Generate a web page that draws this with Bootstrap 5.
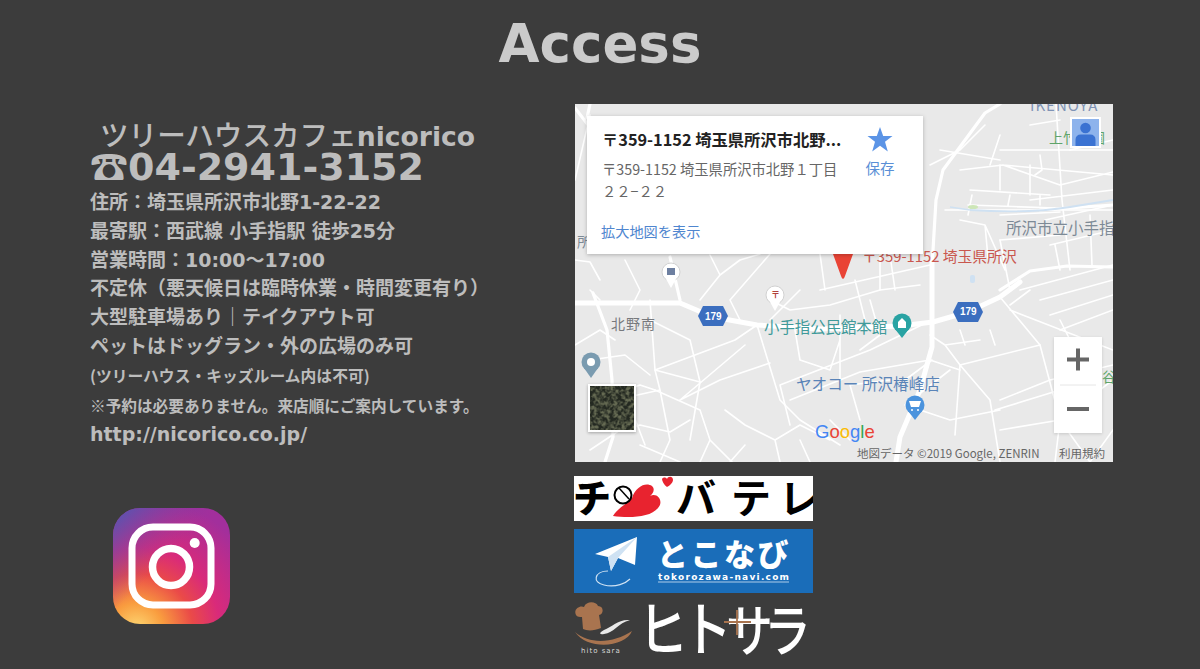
<!DOCTYPE html>
<html lang="ja">
<head>
<meta charset="utf-8">
<title>Access</title>
<link rel="stylesheet" href="https://cdn.jsdelivr.net/npm/bootstrap@5.3.0/dist/css/bootstrap.min.css">
<style>
html,body{height:100%}
body{background:#3c3c3c;color:#bdbdbd;font-family:"DejaVu Sans","Noto Sans CJK JP",sans-serif;overflow:hidden}
.page-title{font-family:"DejaVu Sans",sans-serif;font-weight:700;font-size:53px;line-height:66px;color:#cbcbcb;margin:11px 0 27px}
.left-col{width:575px;padding-left:90px}
.info{font-weight:700;font-size:19px;line-height:28.800px;white-space:nowrap;font-family:"Noto Sans CJK JP","DejaVu Sans",sans-serif;word-spacing:2px}
.info>div{height:28.800px}
.info .lat{font-family:"DejaVu Sans","Noto Sans CJK JP",sans-serif}
.info>.shop{font-size:28.600px;height:30px;line-height:30px;padding-left:10px;margin-top:15px;font-weight:500}
.shop .lat{font-size:26.600px;font-weight:700}
.info>.tel{font-size:38px;height:38px;line-height:30px;font-family:"DejaVu Sans",sans-serif;margin-bottom:0}
.tel .ph{font-family:"Noto Sans CJK JP","DejaVu Sans",sans-serif}
.info>.small1{font-size:15.800px;height:31px;line-height:31px}
.info>.small2{font-size:15.670px;height:29px;line-height:29px}
.info>.url{font-size:19px;line-height:28px;word-spacing:0}
.insta{margin:59px 0 0 23px;display:block}
.map{position:relative;width:538px;height:358px;background:#e9e9e9;overflow:hidden;font-family:"Noto Sans CJK JP","Liberation Sans",sans-serif}
.map>svg.base{position:absolute;inset:0;filter:blur(.35px)}
.lbl{position:absolute;white-space:nowrap;line-height:1}
.info-card{position:absolute;left:12px;top:12px;width:336px;height:138px;background:#fff;box-shadow:0 1px 4px rgba(0,0,0,.25);padding:13px 15px}
.info-title{font-weight:700;font-size:16.300px;line-height:20px;color:#222;white-space:nowrap}
.info-addr{font-size:14.300px;line-height:22px;color:#666;margin-top:9px;white-space:nowrap}
.info-link{position:absolute;left:14px;bottom:13px;font-size:14.200px;line-height:20px;color:#4f86cf}
.info-save{position:absolute;left:268px;top:11px;width:50px;text-align:center;color:#5a8fd6;font-size:14.500px;line-height:20px}
.info-save svg{margin-bottom:6px}
.zoomctl{position:absolute;left:479px;top:233px;width:48px;height:96px;background:#fff;box-shadow:0 1px 3px rgba(0,0,0,.15)}
.person{position:absolute;left:495px;top:13px;width:31px;height:31px;border:2px solid #fff;background:#8db3ec}
.sat{position:absolute;left:13px;top:280px;width:48px;height:48px;border:2px solid #fff;box-shadow:0 1px 3px rgba(0,0,0,.3);overflow:hidden}
.logos{margin-top:14px;margin-left:-1px;gap:8px;width:239px}
.logos svg{display:block}
</style>
</head>
<body>
<h1 class="page-title text-center">Access</h1>
<main class="d-flex align-items-start">
<section class="left-col">
<div class="info">
<div class="shop">ツリーハウスカフェ<span class="lat">nicorico</span></div>
<div class="tel"><span class="ph">☎</span>04-2941-3152</div>
<div>住所：埼玉県所沢市北野<span class="lat">1-22-22</span></div>
<div>最寄駅：西武線 小手指駅 徒歩<span class="lat">25</span>分</div>
<div>営業時間：<span class="lat">10:00</span>～<span class="lat">17:00</span></div>
<div>不定休（悪天候日は臨時休業・時間変更有り）</div>
<div>大型駐車場あり｜テイクアウト可</div>
<div>ペットはドッグラン・外の広場のみ可</div>
<div class="small1">(ツリーハウス・キッズルーム内は不可)</div>
<div class="small2">※予約は必要ありません。来店順にご案内しています。</div>
<div class="url lat">http://nicorico.co.jp/</div>
</div>
<svg class="insta" width="117" height="116" viewBox="0 0 117 116" role="img" aria-label="Instagram">
<defs>
<radialGradient id="ig1" cx="0.2" cy="1.05" r="1.15">
<stop offset="0" stop-color="#fdda75"/><stop offset=".2" stop-color="#f99d3f"/><stop offset=".42" stop-color="#ea4a48"/><stop offset=".62" stop-color="#d92a7a"/><stop offset="1" stop-color="#a22f9c"/>
</radialGradient>
<linearGradient id="ig2" x1="0" y1="0" x2=".45" y2=".45">
<stop offset="0" stop-color="#4a5bb5"/><stop offset="1" stop-color="#8a3aa0" stop-opacity="0"/>
</linearGradient>
</defs>
<rect width="117" height="116" rx="27" fill="url(#ig1)"/>
<rect width="117" height="116" rx="27" fill="url(#ig2)"/>
<rect x="19" y="19" width="79" height="78" rx="21" fill="none" stroke="#fff" stroke-width="7"/>
<circle cx="58" cy="59" r="18.500" fill="none" stroke="#fff" stroke-width="7.500"/>
<circle cx="81.700" cy="35" r="5" fill="#fff"/>
</svg>
</section>
<section>
<div class="map">
<svg class="base" width="538" height="358" viewBox="575 104 538 358" aria-hidden="true">
<g fill="none" stroke="#fff" stroke-linecap="round" stroke-linejoin="round">
<g stroke-width="1.600">
<path d="M1000 150L1113 150M1003 165L1113 175M960 170L1003 165L1060 185L1113 172"/>
<path d="M1056 104L1062 200L1070 270M1030 200L1113 190M1045 220L1113 205M1000 215L1060 212"/>
<path d="M970 190L1050 195M968 205L1055 208M972 195L968 215M1010 195L1008 205M1040 195L1040 205"/>
<path d="M1000 165L1000 190M1030 165L1030 195M1040 155L1042 170L1035 175"/>
<path d="M940 150L1000 160M945 210L1113 210"/>
<path d="M1000 240L1010 290M960 220L985 225L1005 270M985 225L988 258"/>
<path d="M1055 245L1060 270M1090 215L1092 265M1050 245L1113 230M1000 240L1060 235"/>
<path d="M1020 290L1113 265M1040 300L1113 280M1050 315L1113 295M1060 330L1113 310"/>
<path d="M1000 297L1040 345L1060 420L1055 462M1010 310L1113 350M1010 305L1030 290M1060 320L1070 340"/>
<path d="M1040 345L960 365L955 435M960 365L990 400L1000 462M1000 400L1050 380L1113 365"/>
<path d="M995 410L1060 390M1000 430L1060 420L1113 380M1060 420L1090 462L1113 430M950 370L905 405L950 420L1000 410"/>
<path d="M980 340L945 345L960 365M945 345L930 335M960 330L965 345M990 330L995 345"/>
<path d="M932 360L905 380M930 360L960 370"/>
<path d="M757 325L780 400L800 420L840 445M745 345L680 400M680 400L720 380L770 363"/>
<path d="M780 385L870 350L932 320M790 400L860 372L930 360M780 385L790 425"/>
<path d="M650 300L655 370L700 382M655 370L695 355L735 340L757 325M655 390L700 410L710 440L735 465M710 440L700 462"/>
<path d="M650 320L690 340L700 382L690 440M615 400L660 390L655 370M625 393L645 445M660 390L670 440L660 462"/>
<path d="M612 395L640 385L655 390M590 450L620 430L640 425L670 432L690 420M640 445L680 462"/>
<path d="M725 410L745 425L775 440L800 425L830 440M775 440L780 462M730 462L745 445M800 440L810 462"/>
<path d="M795 330L800 360L830 370L840 340M840 315L840 380M890 380L850 385L860 420M830 420L850 440"/>
<path d="M770 300L790 310L830 305L880 290M880 290L920 285M870 300L880 335L860 350"/>
<path d="M710 255L720 275L740 260L760 254M770 254L730 300L740 320M720 275L700 300M800 290L770 320"/>
<path d="M820 254L825 290M820 290L930 265M855 280L865 320M895 290L890 255M880 250L880 290"/>
<path d="M575 180L590 115M575 260L590 262L600 280M575 345L600 330L615 340M590 360L625 355L650 375"/>
<path d="M590 290L600 300M625 260L640 290L630 310"/>
<path d="M930 165L960 150L985 125M990 165L1000 135M1030 125L1060 120M1070 150L1113 140"/>
</g>
<g stroke-width="3.200">
<path d="M932 267L936 200L943 170L985 113L1000 104"/>
<path d="M1113 267L1067 266L1030 271L1000 290"/>
<path d="M670 257L680 300"/>
<path d="M593 293L607 330L612 380L613 437L605 462"/>
<path d="M575 108L592 130M590 104L587 118"/>
<path d="M1040 210L1113 205"/>
</g>
<g stroke-width="5">
<path d="M575 303L680 303L713 317L757 325L820 329L900 326L933 322L968 312L1000 297L1020 282"/>
<path d="M932 260L932 347L920 390L900 437L896 462"/>
</g>
</g>
<path d="M970 210C1000 212 1040 212 1070 207L1113 200" fill="none" stroke="#cfe1f2" stroke-width="1.800"/>
<path d="M950 207L970 210" fill="none" stroke="#cfe1f2" stroke-width="1.500"/>
<ellipse cx="973" cy="207" rx="5" ry="2" fill="#cde6b8"/>
<rect x="970" y="275" width="5" height="8" rx="2" fill="#cfe1f2"/>
<path d="M713 306H723L728 316L723 326H703L698 316L703 306Z" fill="#3b6ebf"/>
<path d="M958 302H978L983 312L978 322H958L953 312Z" fill="#3b6ebf"/>
<g>
<circle cx="671" cy="272" r="9" fill="#fff" stroke="#d0d0d0"/><path d="M666 279L671 288L676 279Z" fill="#fff"/>
<rect x="667" y="268" width="8" height="7" fill="#6d7fa0"/>
<circle cx="775" cy="295" r="9" fill="#fff" stroke="#d0d0d0"/><path d="M770 302L775 311L780 302Z" fill="#fff"/>
<circle cx="591" cy="362" r="9.500" fill="#7a9bb0"/><path d="M584 368L591 378L598 368Z" fill="#7a9bb0"/><circle cx="591" cy="362" r="4" fill="#fff"/>
<circle cx="902" cy="323" r="9.500" fill="#29a3a3"/><path d="M895 329L902 338L909 329Z" fill="#29a3a3"/><path d="M898 328V322L902 318L906 322V328Z" fill="#fff"/>
<circle cx="915" cy="405" r="9.500" fill="#4b93dd"/><path d="M908 411L915 420L922 411Z" fill="#4b93dd"/><path d="M909 401H921L919 407H911Z" fill="#fff"/><circle cx="912" cy="410" r="1" fill="#fff"/><circle cx="918" cy="410" r="1" fill="#fff"/>
<path d="M833 254H853L845 276Q843 282 841 276Z" fill="#e94335"/>
</g>
</svg>
<span class="lbl" style="left:455px;top:-7px;font-size:15px;letter-spacing:1px;color:#7f93b5">IKENOYA</span>
<span class="lbl" style="left:474px;top:26px;font-size:14px;color:#5fa56a">上竹公園</span>
<span class="lbl" style="left:431px;top:116px;font-size:15.500px;color:#7d8a96">所沢市立小手指</span>
<span class="lbl" style="left:287px;top:145px;font-size:14.800px;color:#c9574e">〒359-1152 埼玉県所沢</span>
<span class="lbl" style="left:2px;top:130px;font-size:14px;color:#7d8a96">所</span>
<span class="lbl" style="left:36px;top:212px;font-size:14px;color:#77797d;letter-spacing:1px">北野南</span>
<span class="lbl" style="left:189px;top:215px;font-size:15.400px;color:#3f9a9a">小手指公民館本館</span>
<span class="lbl" style="left:221px;top:272px;font-size:15.600px;color:#5a84b8">ヤオコー 所沢椿峰店</span>
<span class="lbl" style="left:527px;top:265px;font-size:14px;color:#5fa56a">谷</span>
<span class="lbl" style="left:130px;top:208px;font-size:10px;font-weight:700;color:#fff;font-family:'Liberation Sans',sans-serif">179</span>
<span class="lbl" style="left:385px;top:203px;font-size:10px;font-weight:700;color:#fff;font-family:'Liberation Sans',sans-serif">179</span>
<span class="lbl" style="left:196px;top:186px;font-size:9px;font-weight:700;color:#b0413a">〒</span>
<span class="lbl" style="left:240px;top:319px;font-size:18.500px;font-family:'Liberation Sans',sans-serif"><span style="color:#4285f4">G</span><span style="color:#ea4335">o</span><span style="color:#fbbc05">o</span><span style="color:#4285f4">g</span><span style="color:#34a853">l</span><span style="color:#ea4335">e</span></span>
<span class="lbl" style="left:282px;top:344px;font-size:11.500px;color:#666">地図データ ©2019 Google, ZENRIN</span>
<span class="lbl" style="left:484px;top:344px;font-size:11.500px;color:#666">利用規約</span>
<div class="info-card">
<div class="info-title">〒359-1152 埼玉県所沢市北野...</div>
<div class="info-addr">〒359-1152 埼玉県所沢市北野１丁目<br>２２−２２</div>
<div class="info-save">
<svg width="26" height="25" viewBox="0 0 26 25" class="d-block mx-auto" aria-hidden="true"><path d="M13 0L16.200 9H25.500L18 14.800L20.800 24.500L13 18.800L5.200 24.500L8 14.800L.5 9H9.800Z" fill="#5b94e6"/></svg>
保存</div>
<div class="info-link">拡大地図を表示</div>
</div>
<div class="person"><svg width="27" height="27" viewBox="0 0 27 27" class="d-block" aria-hidden="true"><circle cx="13.500" cy="9" r="5.300" fill="#3a72d2"/><path d="M3.500 27V21Q3.500 15.500 9 15.500H18Q23.500 15.500 23.500 21V27Z" fill="#3a72d2"/></svg></div>
<div class="sat"><svg width="44" height="44" class="d-block" aria-hidden="true"><filter id="noi" color-interpolation-filters="sRGB" x="0" y="0" width="100%" height="100%"><feTurbulence type="fractalNoise" baseFrequency=".25" numOctaves="4" seed="7"/><feColorMatrix values="0 0 0 0 .14  0 0 0 0 .16  0 0 0 0 .13  3 0 0 0 -.9"/></filter><rect width="44" height="44" fill="#656a52"/><rect width="44" height="44" filter="url(#noi)"/></svg></div>
<div class="zoomctl">
<svg width="48" height="96" viewBox="0 0 48 96" class="d-block" aria-hidden="true"><path d="M13 22.500H35M24 11.500V33.500" stroke="#666" stroke-width="4"/><path d="M6 48H42" stroke="#e6e6e6"/><path d="M13 72H35" stroke="#666" stroke-width="4"/></svg>
</div>
</div>
<div class="logos d-flex flex-column">
<svg width="239" height="45" viewBox="0 0 239 45" role="img" aria-label="チバテレ">
<rect width="239" height="45" fill="#fff"/>
<text x="-1" y="36" font-family="Noto Sans CJK JP" font-weight="900" font-size="38" fill="#000">チ</text>
<path d="M39 40C44 32 50 30 58 22C62 10 72 6 78 10C82 14 78 18 76 20C84 16 90 26 84 32C76 42 54 42 39 40Z" fill="#e8232f"/>
<circle cx="49" cy="19" r="8.500" fill="#fff" stroke="#000" stroke-width="2"/>
<path d="M45 12L55 23" stroke="#000" stroke-width="1.500"/>
<path d="M93 3C94 0 99 0 99 4C99 7 95 10 93 11C90 9 88 5 88 3C89 1 92 1 93 3Z" fill="#e8232f"/>
<text x="102 157 205" y="37" font-family="Noto Sans CJK JP" font-weight="700" font-size="40" fill="#000">バテレ</text>
</svg>
<svg width="239" height="64" viewBox="0 0 239 64" role="img" aria-label="とこなび tokorozawa-navi.com">
<rect width="239" height="64" fill="#1a6db9"/>
<path d="M21 25L63 8L61 36L44 29L37 42L34 28Z" fill="#fff"/>
<path d="M34 28L63 8L44 29L37 42Z" fill="#cfe2f3"/>
<path d="M34 42C20 42 18 54 30 56C42 59 52 54 56 50" fill="none" stroke="#cfe2f3" stroke-width="1.200"/>
<text x="83" y="37" font-family="Noto Sans CJK JP" font-weight="900" font-size="31" letter-spacing="2.500" fill="#fff">とこなび</text>
<text x="84" y="50.500" font-family="DejaVu Sans" font-weight="700" font-size="9" textLength="131" fill="#fff">tokorozawa-navi.com</text>
<path d="M84 53H215" stroke="#d5e6f5" stroke-width=".8"/>
</svg>
<svg width="239" height="55" viewBox="0 0 239 55" role="img" aria-label="ヒト+サラ hito sara">
<path d="M2 14C-1 8 6 4 10 6C12 0 22 0 24 5C30 5 30 13 25 14L27 27C20 30 13 30 9 28L8 16C6 16 3 16 2 14Z" fill="#a9744f"/>
<path d="M1 31C16 44 40 42 58 30C52 46 14 50 1 31Z" fill="#a9744f"/>
<path d="M56 19C44 18 38 26 30 29C26 31 24 34 30 33C40 32 44 22 56 19Z" fill="#e8e8e8"/>
<text x="7" y="52" font-family="DejaVu Sans" font-size="7" letter-spacing="1" fill="#d8d8d8">hito sara</text>
<text x="64 108" y="42" transform="scale(1 1.180)" font-family="Noto Sans CJK JP" font-weight="500" font-size="50" fill="#fff">ヒト</text>
<text x="152 190" y="42" transform="scale(1 1.180)" font-family="Noto Sans CJK JP" font-weight="500" font-size="47" fill="#fff">サラ</text>
<path d="M150 21H177M163 9V34" stroke="#a9744f" stroke-width="1.800"/>
</svg>
</div>
</section>
</main>
</body>
</html>
